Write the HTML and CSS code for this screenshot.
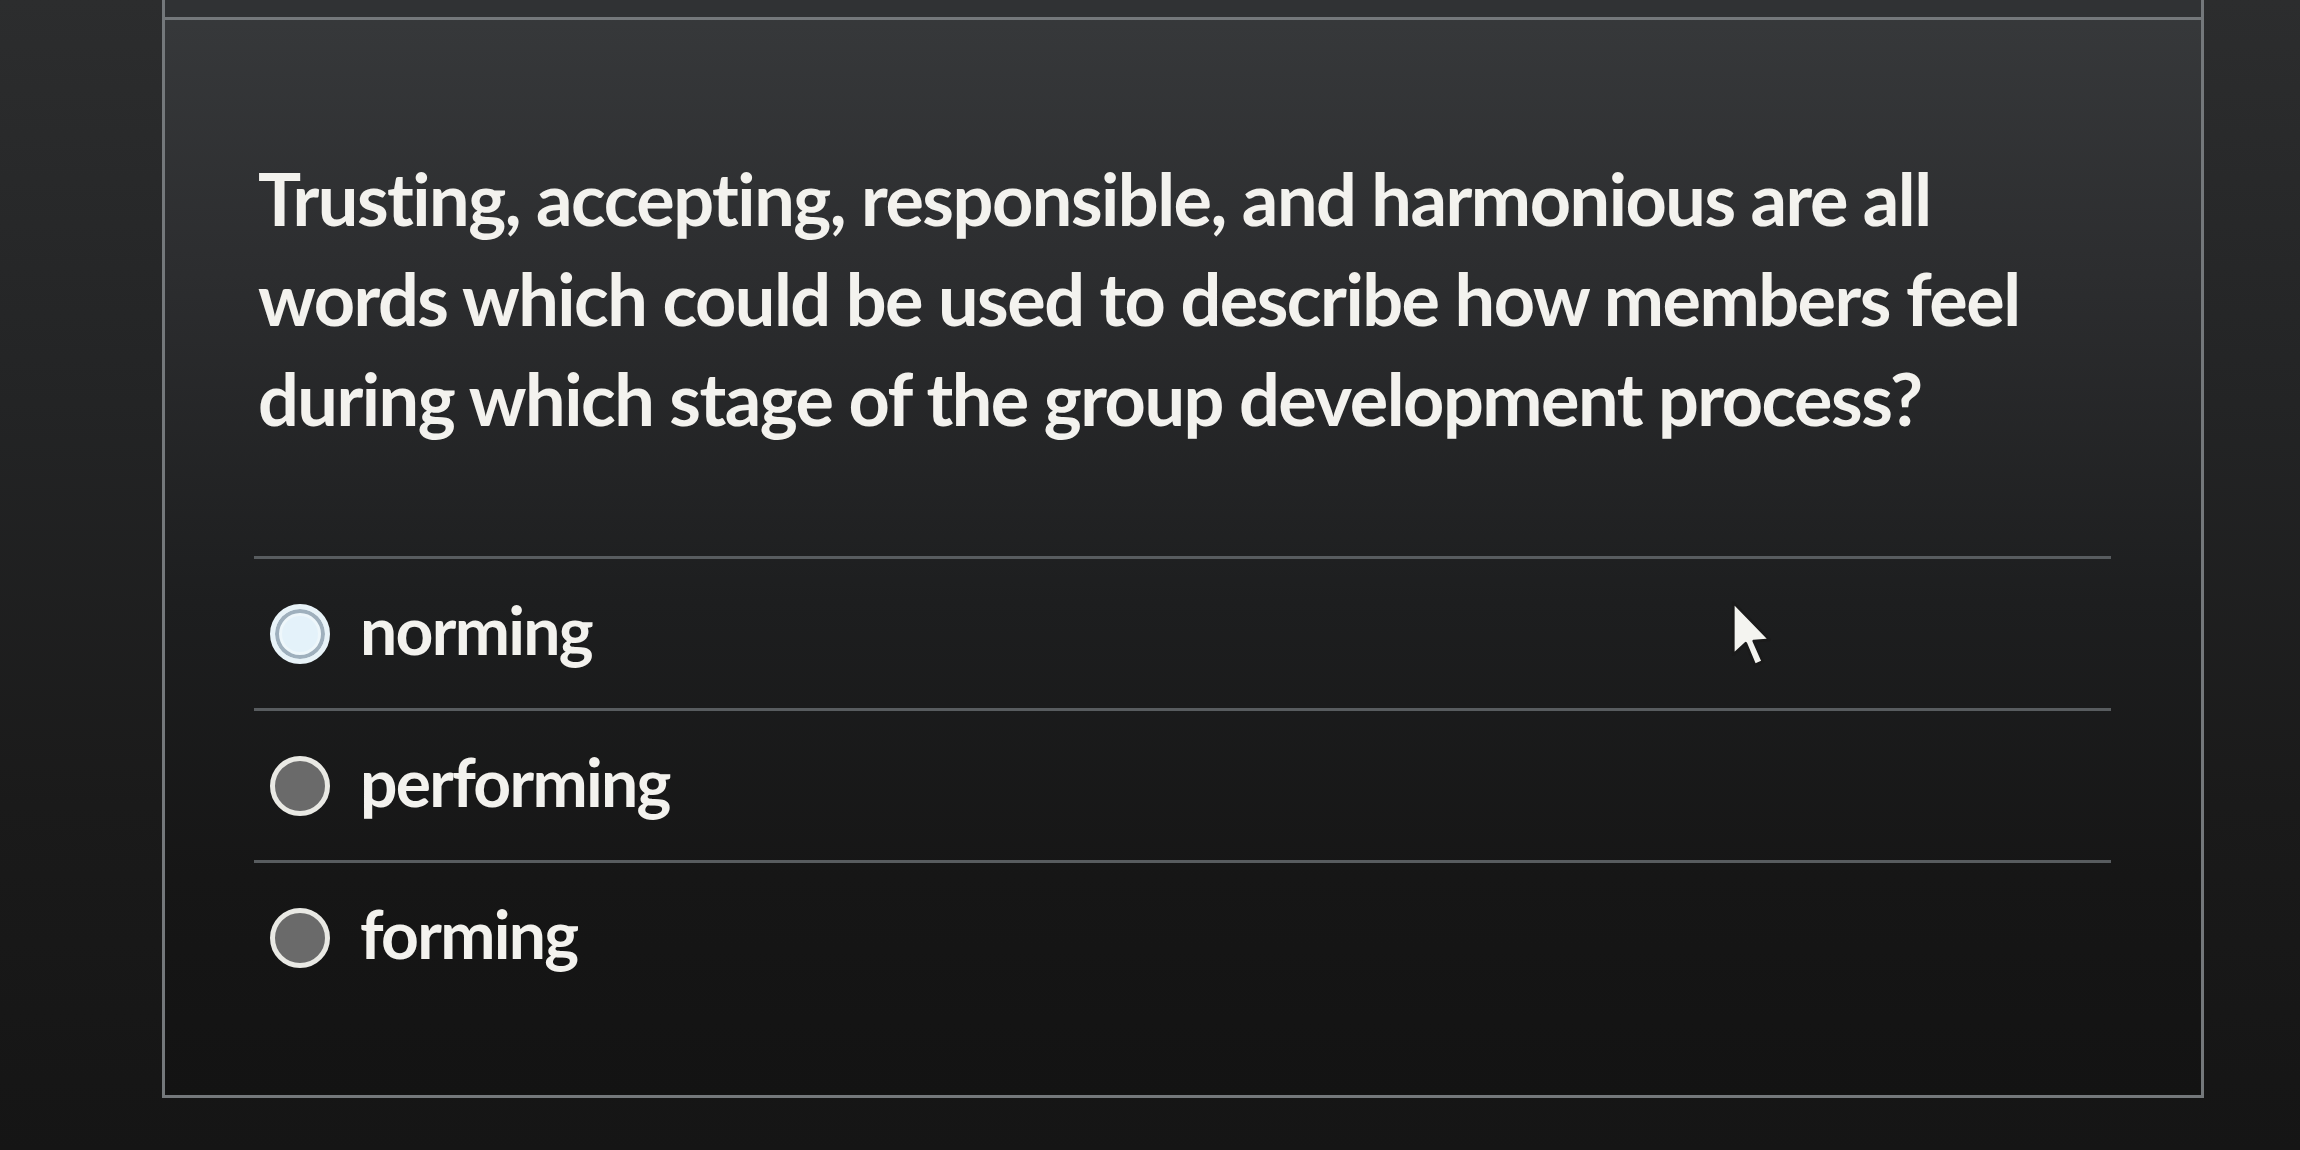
FILE: index.html
```html
<!DOCTYPE html>
<html lang="en">
<head>
<meta charset="utf-8">
<title>Quiz question</title>
<link rel="stylesheet" href="styles.css">
</head>
<body>
<div class="screen">
  <div class="panel">
    <div class="panel-head"></div>
    <div class="panel-body">
      <p class="question">Trusting, accepting, responsible, and harmonious are all words which could be used to describe how members feel during which stage of the group development process?</p>
      <ul class="answers">
        <li class="answer">
          <span class="radio radio-selected"></span>
          <span class="label">norming</span>
        </li>
        <li class="answer">
          <span class="radio"></span>
          <span class="label">performing</span>
        </li>
        <li class="answer">
          <span class="radio"></span>
          <span class="label">forming</span>
        </li>
      </ul>
    </div>
    <svg class="cursor" width="50" height="73" viewBox="0 0 22 32" aria-hidden="true">
      <path d="M1 1 L1 24 L6.5 19 L10.5 28.5 L14 27 L10 18 L17 17.5 Z" fill="#f4f4f0" stroke="#1a1a1a" stroke-width="1.2" stroke-linejoin="round"/>
    </svg>
  </div>
</div>
</body>
</html>
```
FILE: styles.css
```css
html, body {
  margin: 0;
  padding: 0;
}

body {
  width: 2300px;
  height: 1150px;
  overflow: hidden;
  background: linear-gradient(180deg, #2c2d2e 0%, #232425 35%, #1a1a1a 70%, #151515 100%);
  font-family: Lato, "Open Sans", "Liberation Sans", sans-serif;
  color: #f3f2ee;
}

.screen {
  padding-left: 162px;
  padding-right: 96px;
}

.panel {
  position: relative;
  height: 1098px;
  border-left: 3px solid #74787b;
  border-right: 3px solid #74787b;
  border-bottom: 3px solid #74787b;
  background: linear-gradient(180deg, #37393b 0%, #2c2d2f 25%, #1d1e1f 55%, #161616 80%, #131313 100%);
  box-sizing: border-box;
}

.panel-head {
  height: 17px;
  border-bottom: 3px solid #74787b;
  background: #303234;
}

.panel-body {
  padding: 128px 90px 0 93px;
}

.question {
  margin: 0;
  font-size: 72px;
  font-weight: 700;
  line-height: 100px;
  letter-spacing: -1.5px;
  max-width: 1800px;
}

.answers {
  list-style: none;
  margin: 108px 0 0 -4px;
  padding: 0;
}

.answer {
  display: flex;
  align-items: center;
  gap: 30px;
  height: 149px;
  padding-left: 16px;
  border-top: 3px solid #585c5f;
}

.radio {
  flex: none;
  width: 50px;
  height: 50px;
  border-radius: 50%;
  border: 5px solid #e9e9e4;
  background: #6a6a6a;
}

.radio-selected {
  background: #e4f2fa;
  border-color: #e8f3f8;
  box-shadow: inset 0 0 0 4px #9fb0bd, inset 0 0 0 7px #eef7fb;
}

.label {
  font-size: 66px;
  font-weight: 700;
  letter-spacing: -1.7px;
  line-height: 1;
  padding-bottom: 8px;
}

.cursor {
  position: absolute;
  left: 1566px;
  top: 600px;
}
```
